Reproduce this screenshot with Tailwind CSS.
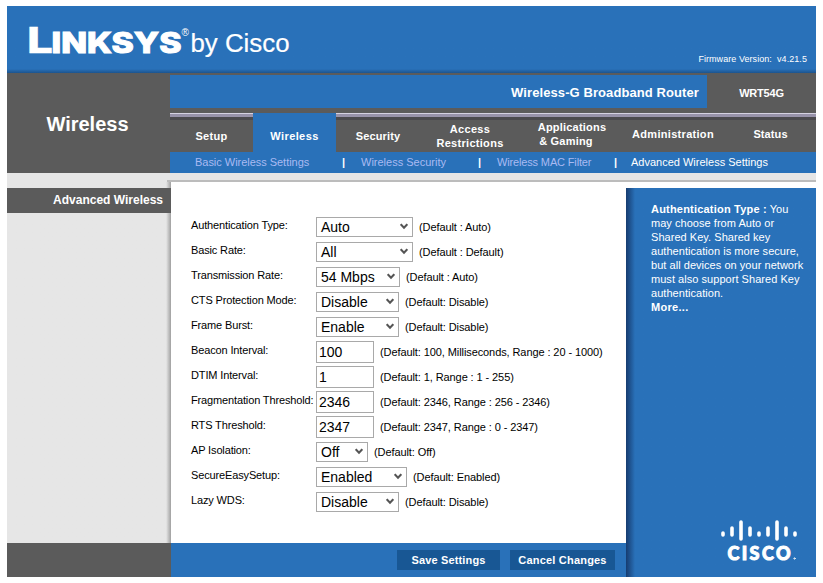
<!DOCTYPE html>
<html lang="en">
  <head>
    <meta charset="UTF-8" />
    <meta name="viewport" content="width=device-width, initial-scale=1.0" />
    <title>Advanced Wireless Settings</title>
    <script src="https://cdn.jsdelivr.net/npm/@tailwindcss/browser@4"></script>
  </head>
  <body
    class="bg-white pl-[7px] pt-[6px] overflow-hidden font-['Liberation_Sans',Arial,sans-serif] text-[11px] leading-[14px]"
  >
    <div class="w-[809px] h-[571px] flex flex-col">
      <!-- Header -->
      <header
        class="h-[67px] shrink-0 flex justify-between items-end bg-linear-to-b from-[#2971b9] from-94% to-[#1c548e] text-white"
      >
        <svg class="w-[300px] h-[67px]" viewBox="7 6 300 67" fill="#fff">
          <g font-family="Inter" font-weight="800" stroke="#fff">
            <text x="27" y="52.5" font-size="36" stroke-width="0.3" textLength="26" lengthAdjust="spacingAndGlyphs">L</text>
            <text x="51.500" y="52.5" font-size="28" stroke-width="1" textLength="130" lengthAdjust="spacingAndGlyphs">INKSYS</text>
          </g>
          <text x="181.500" y="36" font-family="Liberation Sans" font-size="10">®</text>
          <text x="190.500" y="52" font-family="Liberation Sans" font-size="26" textLength="99" lengthAdjust="spacingAndGlyphs" stroke="#fff" stroke-width="0.2">by Cisco</text>
        </svg>
        <div class="text-[9px] tracking-[0.06px] pr-[9px] pb-[7px] whitespace-pre">Firmware Version:  v4.21.5</div>
      </header>

      <!-- Title and navigation -->
      <div class="h-[100px] shrink-0 flex bg-[#5b5b5b] text-white font-bold">
        <h1 class="w-[163px] text-center text-xl leading-[24px] pt-[39px] pr-[2px]">Wireless</h1>
        <div class="w-[646px]">
          <div class="flex h-[35px] pt-[2px]">
            <div class="w-[537px] h-[33px] bg-[#2971b9] text-[13px] tracking-[0.09px] leading-[35px] text-right pr-2">
              Wireless-G Broadband Router
            </div>
            <div class="flex-1 text-center leading-[36px] tracking-[-0.2px]">WRT54G</div>
          </div>
          <div class="h-[5px]"></div>
          <nav class="h-[39px] flex text-center tracking-[0.3px]">
            <div class="w-[83px] border-t border-[#d5d2e2]">
              <div class="h-[3px] bg-[#9893aa]"></div>
              <div class="h-[3px] bg-[#4b4a4e]"></div>
              <div class="pt-[9px]">Setup</div>
            </div>
            <div class="w-[83px] bg-[#2971b9] pt-4 tracking-[0.4px]">Wireless</div>
            <div class="w-[83px] border-t border-[#d5d2e2]">
              <div class="h-[3px] bg-[#9893aa]"></div>
              <div class="h-[3px] bg-[#4b4a4e]"></div>
              <div class="pt-[9px] pl-px tracking-[0.15px]">Security</div>
            </div>
            <div class="w-[102px] border-t border-[#d5d2e2]">
              <div class="h-[3px] bg-[#9893aa]"></div>
              <div class="h-[3px] bg-[#4b4a4e]"></div>
              <div class="pt-[2px]">Access<br />Restrictions</div>
            </div>
            <div class="w-[102px] border-t border-[#d5d2e2]">
              <div class="h-[3px] bg-[#9893aa]"></div>
              <div class="h-[3px] bg-[#4b4a4e]"></div>
              <div class="tracking-[0.2px]">Applications<br /><span class="pr-3">&amp; Gaming</span></div>
            </div>
            <div class="w-[100px] border-t border-[#d5d2e2]">
              <div class="h-[3px] bg-[#9893aa]"></div>
              <div class="h-[3px] bg-[#4b4a4e]"></div>
              <div class="pt-[7px]">Administration</div>
            </div>
            <div class="w-[93px] border-t border-[#d5d2e2]">
              <div class="h-[3px] bg-[#9893aa]"></div>
              <div class="h-[3px] bg-[#4b4a4e]"></div>
              <div class="pt-[7px] pl-[2px] tracking-[0.1px]">Status</div>
            </div>
          </nav>
          <div class="h-[21px] bg-[#2971b9] flex font-normal leading-[21px] text-[#a9baf2]">
            <span class="w-[172px] pl-[25px] tracking-[-0.03px]">Basic Wireless Settings</span>
            <span class="w-[19px] text-white font-bold">|</span>
            <span class="w-[117px]">Wireless Security</span>
            <span class="w-[19px] text-white font-bold">|</span>
            <span class="w-[117px] tracking-[-0.15px]">Wireless MAC Filter</span>
            <span class="w-[17px] text-white font-bold">|</span>
            <span class="text-white">Advanced Wireless Settings</span>
          </div>
        </div>
      </div>

      <div class="h-[9px] shrink-0 flex bg-[#e6e6e6]">
        <div class="w-[160px]"></div>
        <div class="flex-1 border-b-2 border-[#bcbcbc]"></div>
      </div>

      <!-- Content -->
      <main class="h-[361px] shrink-0 flex">
        <aside class="w-[164px] bg-linear-to-r from-[#e6e6e6] from-97% to-[#a0a0a0] pt-[6px]">
          <div class="h-[25px] bg-[#5b5b5b] text-white font-bold text-xs leading-[25px] text-right pr-2">
            Advanced Wireless
          </div>
        </aside>
        <section id="settings" class="w-[455px] pl-5 pt-[32px] text-black"></section>
        <aside class="w-[190px] mt-[6px] bg-linear-to-r from-[#163c70] to-[#2971b9] to-[9px] text-white flex flex-col justify-between">
          <p class="pl-[25px] pt-[14px] tracking-[0.04px] whitespace-nowrap">
            <b class="tracking-[0.2px]">Authentication Type :</b> You<br />may choose from Auto or<br />Shared Key. Shared key<br />authentication is more secure,<br />but all devices on your network<br />must also support Shared Key<br />authentication.<br /><b class="tracking-[0.3px]">More...</b>
          </p>
          <svg class="w-[90px] h-[50px] ml-[90px] -mb-[25px] relative" viewBox="716 518 90 50" fill="none" stroke="#fff" stroke-linecap="round">
            <path
              stroke-width="3.600"
              d="M723 533v2M732 528v7M741 522v17M750 528v7M759 533v2M768 528v7M777 522v17M786 528v7M795 533v2"
            />
            <text x="727.500" y="559.5" fill="#fff" stroke-width="1" font-family="Lato" font-weight="900" font-size="18" textLength="63" lengthAdjust="spacing">CISCO</text>
            <circle cx="794.500" cy="558.500" r="0.7" stroke-width="0.8" />
          </svg>
        </aside>
      </main>

      <!-- Buttons -->
      <footer class="h-[34px] shrink-0 flex">
        <div class="w-[164px] bg-[#5b5b5b]"></div>
        <div class="w-[455px] bg-[#2971b9] flex justify-end gap-[10px] pt-[7px] pr-[11px]">
          <button class="w-[103px] h-5 bg-[#185794] text-white font-bold tracking-[0.15px]">Save Settings</button>
          <button class="w-[105px] h-5 bg-[#185794] text-white font-bold tracking-[0.2px]">Cancel Changes</button>
        </div>
        <div class="w-[190px] bg-linear-to-r from-[#163c70] to-[#2971b9] to-[9px]"></div>
      </footer>
    </div>

    <script>
      // [label, value, hint, field width, is a text box]
      const rows = [
        ['Authentication Type:', 'Auto', '(Default : Auto)', 97],
        ['Basic Rate:', 'All', '(Default : Default)', 97],
        ['Transmission Rate:', '54 Mbps', '(Default : Auto)', 84],
        ['CTS Protection Mode:', 'Disable', '(Default: Disable)', 83],
        ['Frame Burst:', 'Enable', '(Default: Disable)', 83],
        ['Beacon Interval:', '100', '(Default: 100, Milliseconds, Range : 20 - 1000)', 58, true],
        ['DTIM Interval:', '1', '(Default: 1, Range : 1 - 255)', 58, true],
        ['Fragmentation Threshold:', '2346', '(Default: 2346, Range : 256 - 2346)', 58, true],
        ['RTS Threshold:', '2347', '(Default: 2347, Range : 0 - 2347)', 58, true],
        ['AP Isolation:', 'Off', '(Default: Off)', 52],
        ['SecureEasySetup:', 'Enabled', '(Default: Enabled)', 91],
        ['Lazy WDS:', 'Disable', '(Default: Disable)', 83],
      ];

      const arrow = `
        <svg class="w-2 h-[7px] mr-[4px]" viewBox="0 0 8 7" fill="none" stroke="#555" stroke-width="2">
          <path d="M0.700 1.200L4 4.800L7.300 1.200" />
        </svg>`;

      document.getElementById('settings').innerHTML = rows
        .map(
          ([label, value, hint, width, isText]) => `
            <div class="h-[25px] flex items-center whitespace-nowrap">
              <label class="w-[125px] shrink-0 pb-[4px] tracking-[-0.14px]">${label}</label>
              <div
                class="${isText ? 'h-[22px] pl-[2px]' : 'h-5 pl-1'} shrink-0 flex items-center justify-between border border-[#a9a9a9] text-[14px]"
                style="width: ${width}px"
              ><span>${value}</span>${isText ? '' : arrow}</div>
              <span class="pl-[6px] pt-px tracking-[-0.09px]">${hint}</span>
            </div>`
        )
        .join('');
    </script>
  </body>
</html>
